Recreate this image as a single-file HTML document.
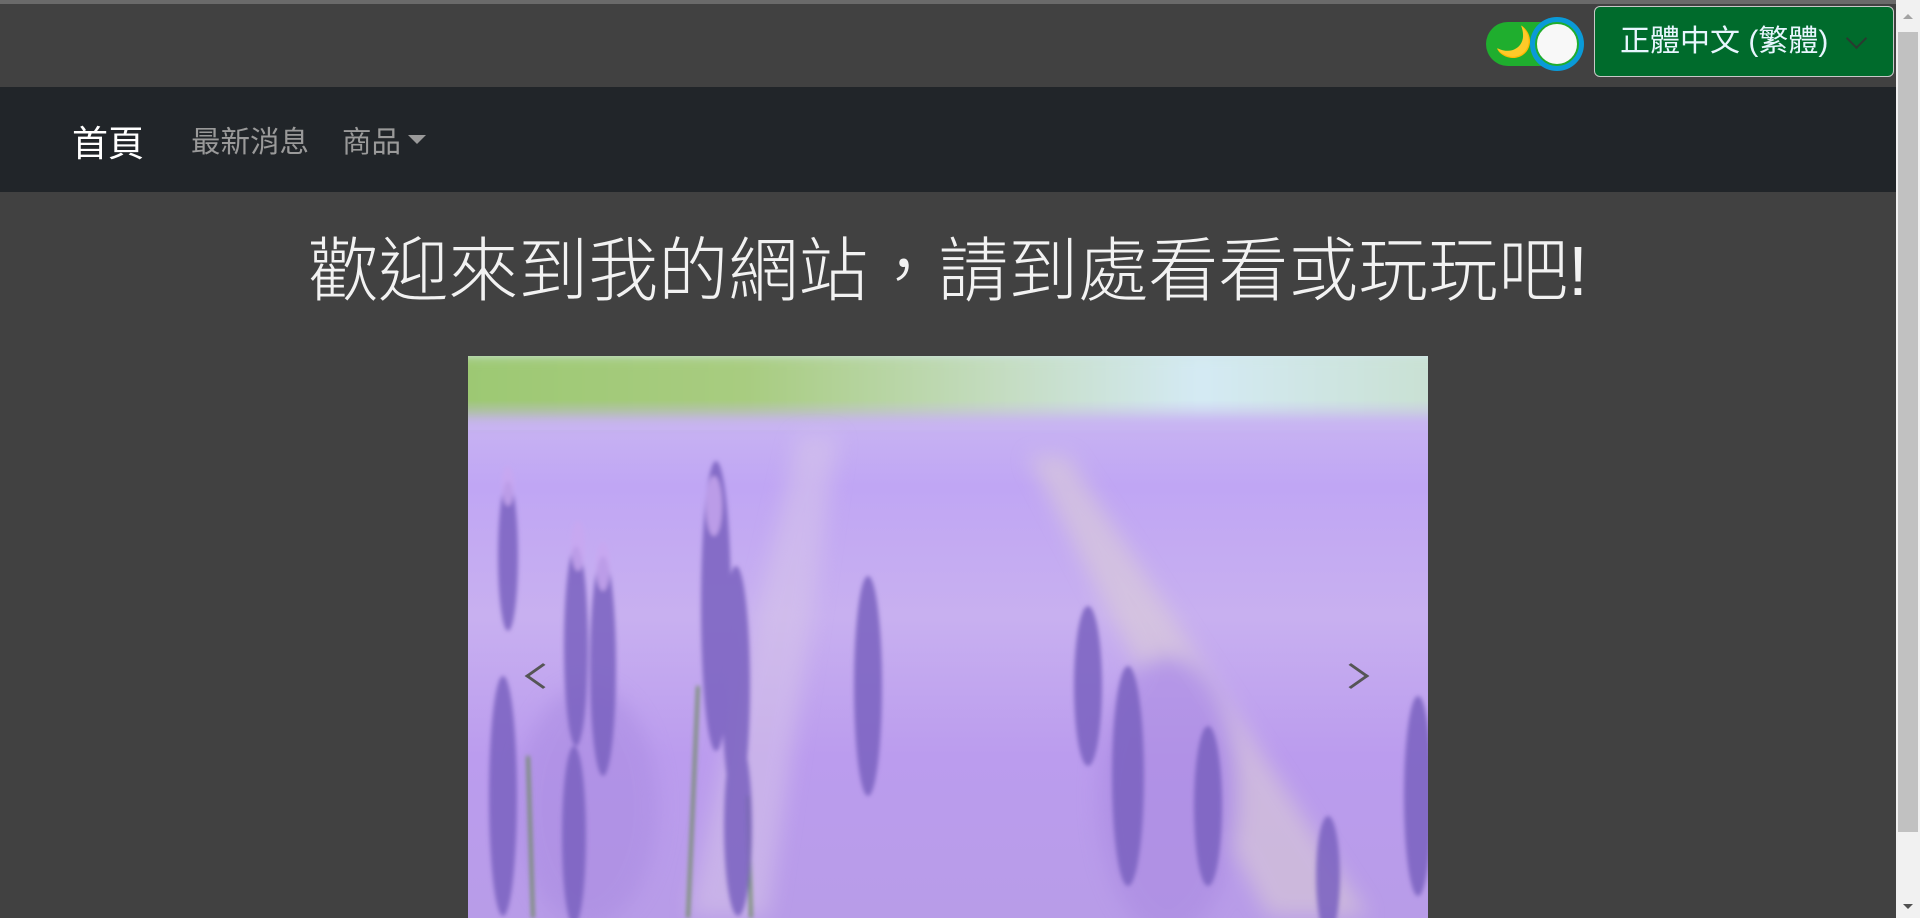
<!DOCTYPE html>
<html><head><meta charset="utf-8"><style>
*{margin:0;padding:0;box-sizing:border-box}
body{width:1920px;height:918px;overflow:hidden;background:#414141;font-family:"Liberation Sans","Noto Sans CJK TC",sans-serif;position:relative}
.topline{position:absolute;left:0;top:0;width:1896px;height:4px;background:#6a6a6a}
.toggle{position:absolute;left:1486px;top:22px;width:96px;height:44px;border-radius:22px;background:#1fae2e}
.knob{position:absolute;left:1535px;top:22px;width:44px;height:44px;border-radius:50%;background:#f8f8f8;border:2px solid #1fae2e;box-shadow:0 0 0 5px #0a9ad8}
.lang{position:absolute;left:1594px;top:6px;width:300px;height:71px;background:#006b2c;border:1px solid #c8c8c8;border-radius:6px;color:#e8f6ff;font-size:30px;line-height:69px;padding-left:25px}
.chev{position:absolute;left:254px;top:24px;width:15px;height:15px;border-right:2px solid #2a3a30;border-bottom:2px solid #2a3a30;transform:rotate(45deg);}
.nav{position:absolute;left:0;top:87px;width:1896px;height:105px;background:#212529}
.nav span{position:absolute;font-size:29.5px;color:#9a9a9a;top:32px}
.title{position:absolute;left:0;width:1896px;top:226px;text-align:center;color:#f2f2f2;font-size:70px;line-height:90px;font-weight:300}
.img{position:absolute;left:468px;top:356px;width:960px;height:562px;overflow:hidden;background:linear-gradient(180deg,#d8ecfa 0px,#b8d49a 20px,#c0d8a0 40px,#c8b4f2 62px,#c0a6f4 130px,#c8b0f0 260px,#bb9cee 400px,#b89ce8 562px)}
.band{position:absolute;left:0;top:0;width:960px;height:62px;background:linear-gradient(90deg,#9cc872 0%,#a8cc80 30%,#c4dcc0 55%,#d4eaf4 75%,#c8e0d0 100%);filter:blur(6px);transform:scale(1.05);}
.band2{position:absolute;left:0;top:44px;width:960px;height:30px;background:linear-gradient(180deg,rgba(200,180,242,0),#c8b4f2);}
.sb{position:absolute;left:1896px;top:0;width:24px;height:918px;background:#f1f1f1}
.thumb{position:absolute;left:1898px;top:32px;width:20px;height:800px;background:#c1c1c1}
</style></head><body>
<div class="topline"></div>
<div class="toggle"></div>
<div style="position:absolute;left:1495px;top:25px;font-size:30px;line-height:36px">🌙</div>
<div class="knob"></div>
<div class="lang">正體中文 (繁體)<div class="chev"></div></div>
<div class="nav">
<span style="left:72px;top:28px;font-size:36px;color:#fff">首頁</span>
<span style="left:191px">最新消息</span>
<span style="left:342px">商品</span>
<div style="position:absolute;left:408px;top:48px;border-left:9px solid transparent;border-right:9px solid transparent;border-top:9px solid #9a9a9a"></div>
</div>
<div class="title">歡迎來到我的網站，請到處看看或玩玩吧!</div>
<div class="img">
<div class="band"></div><div class="band2"></div>
<svg width="960" height="562" viewBox="0 0 960 562" style="position:absolute;left:0;top:0">
<defs><filter id="b"><feGaussianBlur stdDeviation="10"/></filter><filter id="s"><feGaussianBlur stdDeviation="2"/></filter></defs>
<g filter="url(#b)" opacity="0.5">
<path d="M220 560 L330 80 L370 80 L300 560Z" fill="#d8c8e8"/>
<path d="M560 100 L600 100 L900 560 L800 560Z" fill="#e0d4d0"/>
<ellipse cx="700" cy="440" rx="70" ry="140" fill="#a888e0"/>
<ellipse cx="120" cy="450" rx="70" ry="120" fill="#a88ae0"/>
</g>
<g filter="url(#s)">
<g stroke="#6a8a5a" stroke-width="3"><line x1="230" y1="330" x2="220" y2="562"/><line x1="280" y1="440" x2="283" y2="562"/><line x1="60" y1="400" x2="65" y2="562"/></g>
<g fill="#7b62c0" opacity="0.85">
<ellipse cx="40" cy="200" rx="10" ry="75"/>
<ellipse cx="35" cy="440" rx="14" ry="120"/>
<ellipse cx="108" cy="290" rx="12" ry="100"/>
<ellipse cx="135" cy="310" rx="13" ry="110"/>
<ellipse cx="106" cy="480" rx="12" ry="90"/>
<ellipse cx="248" cy="250" rx="15" ry="145"/>
<ellipse cx="268" cy="330" rx="14" ry="120"/>
<ellipse cx="270" cy="470" rx="14" ry="90"/>
<ellipse cx="400" cy="330" rx="14" ry="110"/>
<ellipse cx="620" cy="330" rx="14" ry="80"/>
<ellipse cx="660" cy="420" rx="16" ry="110"/>
<ellipse cx="740" cy="450" rx="14" ry="80"/>
<ellipse cx="950" cy="440" rx="14" ry="100"/>
<ellipse cx="860" cy="520" rx="12" ry="60"/>
</g>
<g fill="#c9a8f0" opacity="0.8">
<ellipse cx="246" cy="150" rx="8" ry="30"/><ellipse cx="110" cy="190" rx="7" ry="25"/><ellipse cx="135" cy="210" rx="7" ry="25"/><ellipse cx="40" cy="130" rx="6" ry="20"/>
</g>
</g>
</svg>
<div style="position:absolute;left:64px;top:309px;width:22px;height:22px;border-left:3px solid #555;border-bottom:3px solid #555;transform:rotate(45deg) skew(-10deg,-10deg)"></div>
<div style="position:absolute;left:872px;top:309px;width:22px;height:22px;border-right:3px solid #555;border-top:3px solid #555;transform:rotate(45deg) skew(-10deg,-10deg)"></div>
</div>
<div class="sb"></div><div class="thumb"></div>
<div style="position:absolute;left:1903px;top:14px;border-left:5px solid transparent;border-right:5px solid transparent;border-bottom:5px solid #a3a3a3"></div>
<div style="position:absolute;left:1903px;top:904px;border-left:5px solid transparent;border-right:5px solid transparent;border-top:5px solid #505050"></div>
</body></html>
